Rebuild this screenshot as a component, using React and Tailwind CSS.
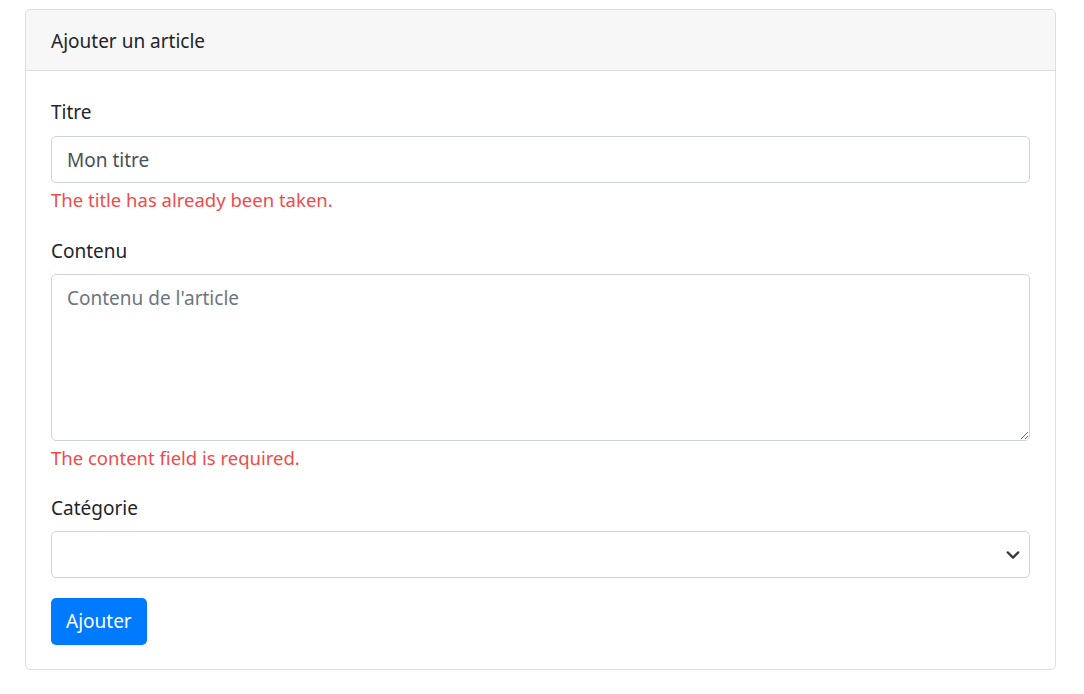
import React from 'react'

const font = { fontFamily: '"Segoe UI", "Noto Sans", "Liberation Sans", sans-serif' }

export default function App() {
  return (
    <div className="min-h-screen bg-white pt-[9px] pl-[25px]" style={font}>
      <div className="w-[1031px] border border-[#dfdfdf] rounded-[5px] text-[#212529]">
        <div className="h-[61px] px-[25px] pt-[2px] flex items-center bg-[#f7f7f7] border-b border-[#dfdfdf] rounded-t-[5px] text-[19px]">
          Ajouter un article
        </div>

        <div className="px-[25px] pt-[25px] pb-[24px]">
          <div className="mb-[22px]">
            <label className="block text-[19px] leading-[30px] pt-[1px] mb-[9px]">Titre</label>
            <input
              type="text"
              defaultValue="Mon titre"
              className="w-full h-[47px] px-[15px] text-[19px] text-[#495057] border border-[#ced4da] rounded-[5px] outline-none"
            />
            <div className="mt-[5px] text-[18.5px] leading-[24px] text-[#ef4b4b]">The title has already been taken.</div>
          </div>

          <div className="mb-[21px]">
            <label className="block text-[19px] leading-[30px] pt-[2px] mb-[8px]">Contenu</label>
            <textarea
              placeholder="Contenu de l'article"
              className="block w-full h-[167px] px-[15px] py-[8px] text-[19px] leading-[30px] text-[#495057] placeholder-[#6c757d] border border-[#ced4da] rounded-[5px] outline-none"
            />
            <div className="mt-[5px] text-[18.5px] leading-[24px] text-[#ef4b4b]">The content field is required.</div>
          </div>

          <div className="mb-[20px]">
            <label className="block text-[19px] leading-[30px] pt-[2px] mb-[8px]">Catégorie</label>
            <div className="relative">
              <select className="block w-full h-[47px] px-[15px] text-[19px] border border-[#ced4da] rounded-[5px] bg-white appearance-none outline-none">
                <option></option>
              </select>
              <svg className="absolute right-[10px] top-[17px] pointer-events-none" width="14" height="14" viewBox="0 0 16 16">
                <path d="M2 5l6 6 6-6" fill="none" stroke="#343a40" strokeWidth="2.5" strokeLinecap="round" strokeLinejoin="round" />
              </svg>
            </div>
          </div>

          <button className="block h-[47px] px-[15px] bg-[#007bff] text-white text-[19px] rounded-[5px]">
            Ajouter
          </button>
        </div>
      </div>
    </div>
  )
}
